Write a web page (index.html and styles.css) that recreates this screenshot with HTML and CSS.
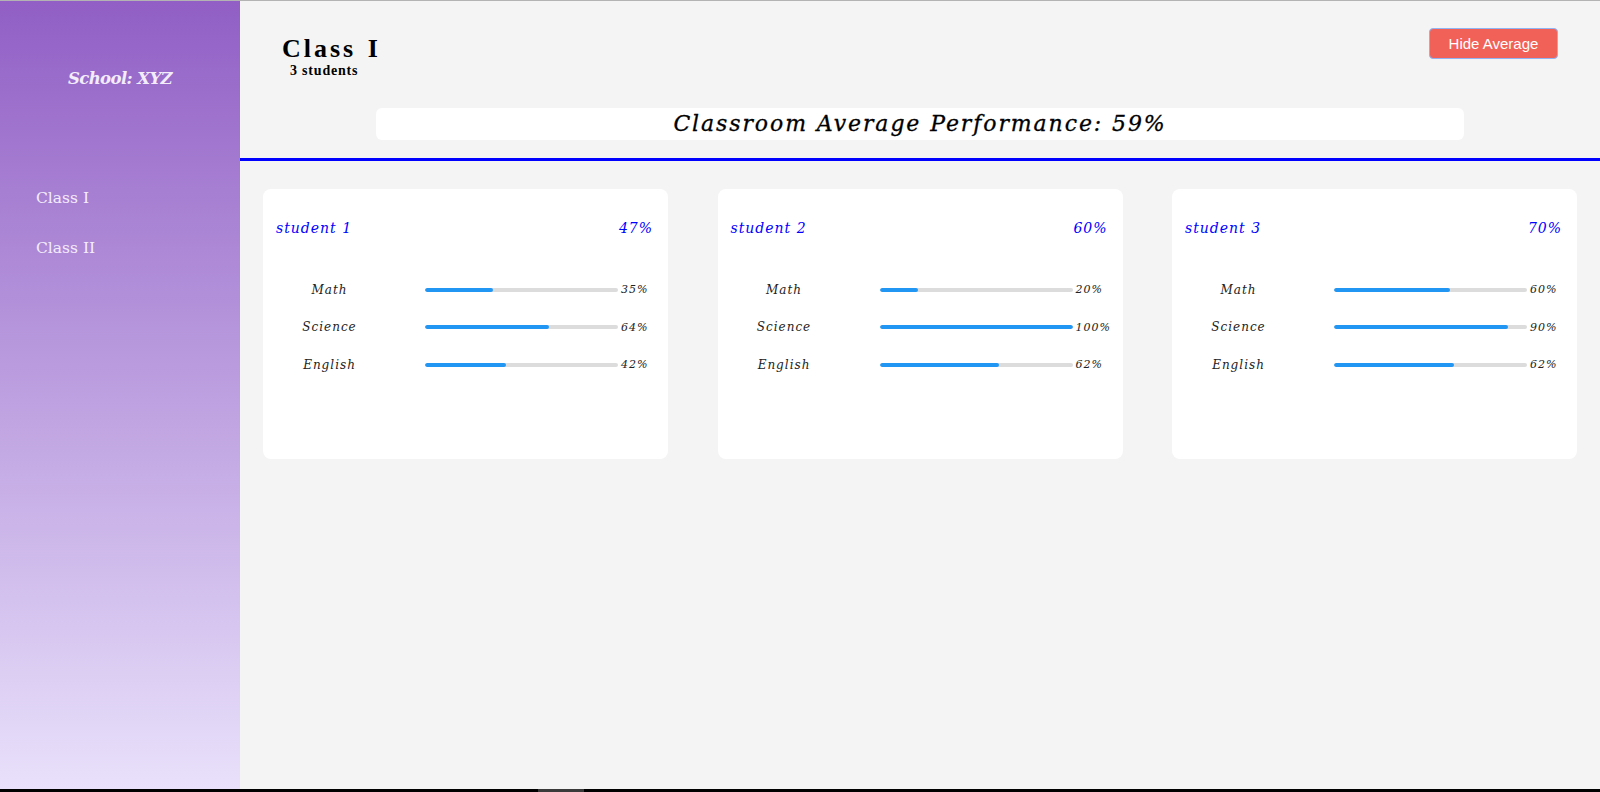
FILE: index.html
```html
<!DOCTYPE html>
<html lang="en">
<head>
<meta charset="utf-8">
<title>School: XYZ</title>
<link rel="stylesheet" href="styles.css">
</head>
<body>
<div class="frame">
  <div class="app">
    <aside class="sidebar">
      <div class="school">School: XYZ</div>
      <nav class="nav">
        <a class="nav-item" href="#">Class I</a>
        <a class="nav-item" href="#">Class II</a>
      </nav>
    </aside>
    <main class="main">
      <header class="header">
        <div class="top-row">
          <div class="title-block">
            <h1 class="title">Class I</h1>
            <div class="count">3 students</div>
          </div>
          <button class="btn" type="button">Hide Average</button>
        </div>
        <div class="avg">Classroom Average Performance: 59%</div>
      </header>
      <section class="cards">
        <article class="card">
          <div class="card-head"><span class="name">student 1</span><span class="score">47%</span></div>
          <div class="subjects">
            <div class="subject"><span class="label">Math</span><span class="track"><span class="fill" style="width:35%"></span></span><span class="pct">35%</span></div>
            <div class="subject"><span class="label">Science</span><span class="track"><span class="fill" style="width:64%"></span></span><span class="pct">64%</span></div>
            <div class="subject"><span class="label">English</span><span class="track"><span class="fill" style="width:42%"></span></span><span class="pct">42%</span></div>
          </div>
        </article>
        <article class="card">
          <div class="card-head"><span class="name">student 2</span><span class="score">60%</span></div>
          <div class="subjects">
            <div class="subject"><span class="label">Math</span><span class="track"><span class="fill" style="width:20%"></span></span><span class="pct">20%</span></div>
            <div class="subject"><span class="label">Science</span><span class="track"><span class="fill" style="width:100%"></span></span><span class="pct">100%</span></div>
            <div class="subject"><span class="label">English</span><span class="track"><span class="fill" style="width:62%"></span></span><span class="pct">62%</span></div>
          </div>
        </article>
        <article class="card">
          <div class="card-head"><span class="name">student 3</span><span class="score">70%</span></div>
          <div class="subjects">
            <div class="subject"><span class="label">Math</span><span class="track"><span class="fill" style="width:60%"></span></span><span class="pct">60%</span></div>
            <div class="subject"><span class="label">Science</span><span class="track"><span class="fill" style="width:90%"></span></span><span class="pct">90%</span></div>
            <div class="subject"><span class="label">English</span><span class="track"><span class="fill" style="width:62%"></span></span><span class="pct">62%</span></div>
          </div>
        </article>
      </section>
    </main>
  </div>
  <div class="bottombar"><span class="thumb"></span></div>
</div>
</body>
</html>
```

FILE: styles.css
```css
* { box-sizing: border-box; }

html, body {
  margin: 0;
  padding: 0;
  height: 100%;
}

body {
  font-family: "DejaVu Serif", "Liberation Serif", serif;
  background: #f4f4f4;
  overflow: hidden;
}

.frame {
  height: 792px;
  display: flex;
  flex-direction: column;
  border-top: 1px solid #b3b3b3;
}

.app {
  flex: 1;
  display: flex;
  min-height: 0;
}

.sidebar {
  width: 240px;
  flex: none;
  background: linear-gradient(to bottom, #915fc5 0%, #e9e1fb 100%);
  color: #f3edfb;
}

.school {
  padding-top: 68px;
  text-align: center;
  font-weight: bold;
  font-style: italic;
  font-size: 16.5px;
  letter-spacing: -0.6px;
}

.nav {
  display: flex;
  flex-direction: column;
  gap: 28px;
  padding: 99px 0 0 36px;
}

.nav-item {
  color: #f3edfb;
  text-decoration: none;
  font-size: 15.5px;
  line-height: 22px;
}

.main {
  flex: 1;
  display: flex;
  flex-direction: column;
  background: #f4f4f4;
}

.header {
  height: 160px;
  border-bottom: 3px solid #0000ff;
}

.top-row {
  display: flex;
  justify-content: space-between;
  align-items: flex-start;
  padding: 33px 42px 0 42px;
}

.title-block {
  display: flex;
  flex-direction: column;
}

.title {
  margin: 0;
  font-family: "Liberation Serif", serif;
  font-weight: bold;
  font-size: 26px;
  line-height: 30px;
  letter-spacing: 3px;
  word-spacing: 2px;
  color: #000;
}

.count {
  margin-left: 8px;
  font-family: "Liberation Serif", serif;
  font-weight: bold;
  font-size: 14px;
  line-height: 14px;
  letter-spacing: 0.8px;
  color: #000;
}

.btn {
  margin-top: -6px;
  width: 129px;
  height: 31px;
  background: #f26157;
  border: 1px solid #8fb3f3;
  border-radius: 4px;
  color: #fff;
  font-family: "Liberation Sans", Arial, sans-serif;
  font-size: 15px;
  padding: 0;
}

.avg {
  width: 80%;
  margin: 30px auto 0;
  height: 32px;
  background: #fff;
  border-radius: 6px;
  text-align: center;
  font-style: italic;
  font-size: 22px;
  line-height: 32px;
  letter-spacing: 1.9px;
  color: #000;
  -webkit-text-stroke: 0.3px #000;
}

.cards {
  display: flex;
  justify-content: space-between;
  padding: 28px 23px 0;
}

.card {
  width: 405px;
  height: 270px;
  background: #fff;
  border-radius: 8px;
  padding: 31px 15px 0 13px;
}

.card-head {
  display: flex;
  justify-content: space-between;
  align-items: baseline;
  color: #0000ff;
  font-style: italic;
  font-size: 14px;
  line-height: 16px;
  letter-spacing: 1px;
}

.subjects {
  margin-top: 45px;
  display: flex;
  flex-direction: column;
  gap: 20.5px;
}

.subject {
  display: grid;
  grid-template-columns: 149px 193px auto;
  align-items: center;
  height: 17px;
}

.label {
  width: 107px;
  text-align: center;
  font-style: italic;
  font-size: 12px;
  letter-spacing: 1px;
  color: #222;
}

.track {
  display: block;
  height: 4px;
  background: #dcdcdc;
  border-radius: 2px;
  overflow: hidden;
}

.fill {
  display: block;
  height: 100%;
  background: #2196f3;
  border-radius: 2px;
}

.pct {
  padding-left: 3px;
  font-style: italic;
  font-size: 11px;
  letter-spacing: 1px;
  color: #222;
}

.bottombar {
  height: 3px;
  flex: none;
  background: #000;
}

.thumb {
  display: block;
  margin-left: 538px;
  width: 46px;
  height: 3px;
  background: #3a3a3a;
}
```
